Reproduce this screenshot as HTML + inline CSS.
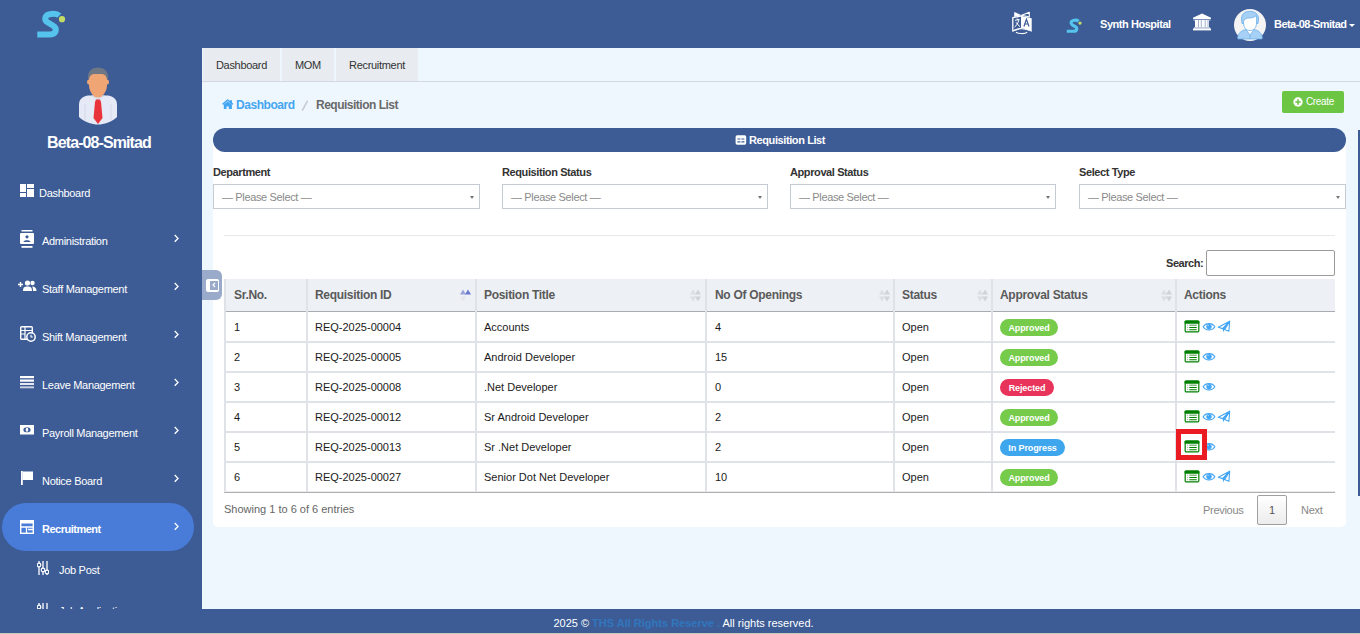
<!DOCTYPE html>
<html><head><meta charset="utf-8">
<style>
*{box-sizing:border-box;margin:0;padding:0}
html,body{width:1360px;height:634px;overflow:hidden;font-family:"Liberation Sans",sans-serif;background:#eff7fe;color:#212529;position:relative}
.a{position:absolute;white-space:nowrap}
#hdr{left:0;top:0;width:1360px;height:48px;background:#3d5c96}
#side{left:0;top:48px;width:202px;height:561px;background:#3d5c96;overflow:hidden}
#foot{left:0;top:609px;width:1360px;height:24px;background:#3d5c96;color:#fff;font-size:11px;text-align:center;line-height:29px;letter-spacing:0;padding-left:7px}
.tab{position:absolute;top:48px;height:33px;background:#e8ecf0;font-size:11px;color:#333;line-height:34px;text-align:center;letter-spacing:-.3px}
.nav{position:absolute;left:0;width:202px;height:48px;color:#fff;font-size:11px;letter-spacing:-.3px}
.nav .t{position:absolute;left:42px;top:17px;line-height:14px}
.nav .ch{position:absolute;left:173px;top:16px;width:6px;height:6px}
.nav svg.i{position:absolute;left:20px}
.card{left:213px;top:140px;width:1133px;height:387px;background:#fff;border-radius:0 0 5px 5px}
.chead{left:213px;top:128px;width:1133px;height:24px;background:#3d5c96;border-radius:12px;color:#fff;font-weight:bold;font-size:12px;line-height:24px}
.lbl{position:absolute;top:166px;font-size:11px;font-weight:bold;color:#333;letter-spacing:-.4px}
.sel{position:absolute;top:184px;height:25px;border:1px solid #c6cbd3;background:#fff;font-size:11px;color:#8a8a8a;line-height:24px;padding-left:8px;letter-spacing:-.35px}
.sel:after{content:"";position:absolute;right:5px;top:11px;border-left:2px solid transparent;border-right:2px solid transparent;border-top:3px solid #777}
.hl{position:absolute;background:#dfe3e8}
.th{position:absolute;top:288px;font-size:12px;font-weight:bold;color:#5a5a5a;letter-spacing:-.3px}
.td{position:absolute;font-size:11px;color:#1a1a1a;margin-top:1px}
.badge{position:absolute;left:1000px;height:17px;line-height:18px;border-radius:9px;color:#fff;font-size:9px;font-weight:bold;text-align:center;letter-spacing:-.1px}
.ap{background:#76cb4b;width:58px}.rj{background:#e8335a;width:54px}.ip{background:#3ea6ec;width:65px}
.sort{position:absolute;top:289px;width:11px;height:13px}
</style></head><body>
<div id="hdr" class="a"></div>
<!-- logo -->
<svg class="a" style="left:30px;top:6px" width="40" height="36" viewBox="30 6 40 36">
  <path d="M59.3 15.6 C57 13.5 52 13.6 49 14.3 C44.5 15.4 44.2 20.3 47.5 22.3 L53.2 25.8 C57.6 28.6 56.3 34.4 50.3 34.4 L37.3 34.4" fill="none" stroke="#56c3ec" stroke-width="6"/>
  <circle cx="62" cy="19.2" r="3.1" fill="#c3dc66"/>
</svg>
<!-- header right -->
<svg class="a" style="left:1008px;top:8px" width="30" height="30" viewBox="0 0 30 30">
  <path d="M6.2 4 L13.7 7.2 L6.2 9 Z" fill="#fff"/>
  <path d="M13.7 7.2 L21.3 4.2 L21.3 9 Z" fill="#3d5c96" stroke="#fff" stroke-width="1.1" stroke-linejoin="round"/>
  <path d="M4.8 9.6 L13.7 7.9 L13.7 20 L4.8 23 Z" fill="#3d5c96" stroke="#fff" stroke-width="1.3" stroke-linejoin="round"/>
  <path d="M13.7 7.9 L23.7 10.2 L23.7 23.2 L13.7 20 Z" fill="#fff"/>
  <path d="M15.9 18.5 L18.4 11.2 L21 18.5 M16.8 16 L20 16" fill="none" stroke="#3d5c96" stroke-width="1.2"/>
  <path d="M7 12.3 L11.5 11.5 M9.2 10.5 L9.5 12 M10.8 12 C10 15.5 8.5 17.5 6.6 19 M8 14.3 C9 16 10.5 17.5 12 18.6" fill="none" stroke="#fff" stroke-width="1"/>
  <path d="M4.8 23 C8 21 11 20.5 13.7 20.8 C17 21 20.5 22 23.7 23.2" fill="none" stroke="#fff" stroke-width="1"/>
  <path d="M8 24.1 C10 25.8 17 26.3 19.2 24.2" fill="none" stroke="#fff" stroke-width="1.1"/>
</svg>
<svg class="a" style="left:1064px;top:16px" width="22" height="18" viewBox="1064 16 22 18">
  <g transform="translate(1046.84 12.85) scale(.535)"><path d="M59.3 15.6 C57 13.5 52 13.6 49 14.3 C44.5 15.4 44.2 20.3 47.5 22.3 L53.2 25.8 C57.6 28.6 56.3 34.4 50.3 34.4 L37.3 34.4" fill="none" stroke="#56c3ec" stroke-width="6"/>
  <circle cx="62" cy="19.2" r="3.1" fill="#c3dc66"/></g>
</svg>
<div class="a" style="left:1100px;top:18px;font-size:11px;font-weight:bold;color:#fff;letter-spacing:-.45px">Synth Hospital</div>
<svg class="a" style="left:1192px;top:12px" width="20" height="20" viewBox="0 0 20 20">
  <path d="M1 5.8 L10 1.6 L19 5.8 L19 7 L1 7 Z" fill="#fff"/>
  <rect x="1.5" y="7.6" width="17" height=".9" fill="#dfe5f0"/>
  <rect x="3" y="8" width="14" height="7.2" fill="#fff"/>
  <path d="M6.5 8 V15 M9.3 8 V15 M13.2 8 V15 M16 8 V15" stroke="#8a9cc4" stroke-width=".8"/>
  <rect x="2" y="15.4" width="16" height="1" fill="#fff"/>
  <rect x="1" y="16.4" width="18" height="2" fill="#fff"/>
</svg>
<svg class="a" style="left:1234px;top:9px" width="32" height="32" viewBox="0 0 32 32">
  <circle cx="16" cy="16" r="16" fill="#f4f4f4"/>
  <path d="M3.6 28.5 C4.5 23 9 20.8 12 20.6 L20 20.6 C23 20.8 27.5 23 28.4 28.5 L28 30 L4 30 Z" fill="#a6d0f5" stroke="#6aaee8" stroke-width=".7"/>
  <path d="M12.2 20.8 L16 26 L19.8 20.8 M16 26 L16 30" fill="#fff" stroke="#6aaee8" stroke-width=".7"/>
  <path d="M7.6 11 C7 5.5 10.5 2.3 15.5 2.3 C20.5 2.3 24.5 4.5 24.5 10 L24 14.5 L22.5 14.5 L9.5 14.5 L8 14.5 Z" fill="#a6d0f5" stroke="#6aaee8" stroke-width=".8"/>
  <path d="M9.6 12 C10.5 9.5 13 9 15.5 9 C18.5 9 21 8 22.3 6.5 C22.8 9 22.5 12 22.5 14 C22.5 19 19.5 21.5 16 21.5 C12.5 21.5 9.6 19 9.6 14 Z" fill="#fff" stroke="#6aaee8" stroke-width=".8"/>
</svg>
<div class="a" style="left:1274px;top:18px;font-size:11px;font-weight:bold;color:#fff;letter-spacing:-.55px">Beta-08-Smitad</div>
<div class="a" style="left:1349px;top:24px;border-left:3px solid transparent;border-right:3px solid transparent;border-top:3px solid #fff"></div>

<div id="side" class="a"></div>
<!-- sidebar avatar -->
<svg class="a" style="left:76px;top:64px" width="44" height="64" viewBox="76 64 44 64">
  <path d="M79 105 C79 98 84 95.5 90 95.5 L106 95.5 C112 95.5 117 98 117 105 L117 117 C111 122.5 104 124.5 98 124.5 C92 124.5 85 122.5 79 117 Z" fill="#e6eaf6"/>
  <path d="M85 104 L85 120 M111 104 L111 120" stroke="#d4d9e8" stroke-width="1"/>
  <path d="M91 95.5 L98 101 L105 95.5 Z" fill="#d8dde8"/>
  <rect x="94.5" y="88" width="7" height="9" fill="#e8956a"/>
  <ellipse cx="88.8" cy="82" rx="1.8" ry="2.5" fill="#f0a574"/>
  <ellipse cx="107.2" cy="82" rx="1.8" ry="2.5" fill="#f0a574"/>
  <path d="M89 78 C89 70 93 71 98 71 C103 71 107 70 107 78 L107 85 C107 92 102 97.5 98 97.5 C94 97.5 89 92 89 85 Z" fill="#f0a574"/>
  <path d="M88 80 C87 71 92 67.5 98 67.5 C104 67.5 109 71 108 80 L107 79 C106 75 104 74 101 74 L95 74 C92 74 90 75 89 79 Z" fill="#6f7785"/>
  <path d="M96 99.5 L100 99.5 L101 102 L102.5 118 L98 124 L93.5 118 L95 102 Z" fill="#e8333a"/>
</svg>
<div class="a" style="left:0;top:134px;width:198px;text-align:center;font-size:16px;font-weight:bold;color:#fff;letter-spacing:-.9px">Beta-08-Smitad</div>

<!-- nav items -->
<div class="nav" style="top:169px">
  <svg class="i" style="top:15px" width="14" height="14" viewBox="0 0 14 14"><rect x="0" y="0" width="6" height="8" fill="#fff"/><rect x="7" y="0" width="7" height="4" fill="#fff"/><rect x="0" y="9" width="6" height="4" fill="#fff"/><rect x="7" y="5" width="7" height="8" fill="#fff"/></svg>
  <div class="t" style="left:39px;top:17px">Dashboard</div>
</div>
<div class="nav" style="top:217px">
  <svg class="i" style="top:13px" width="14" height="19" viewBox="0 0 14 19"><rect x="1.5" y="0" width="11" height="1.5" fill="#fff"/><rect x="0" y="3" width="14" height="11" rx="1" fill="#fff"/><rect x="1.5" y="16" width="11" height="1.8" fill="#fff"/><circle cx="7" cy="6.8" r="1.6" fill="#3d5c96"/><path d="M3.5 12 C3.5 9.5 10.5 9.5 10.5 12 Z" fill="#3d5c96"/></svg>
  <div class="t" style="top:17px">Administration</div>
  <svg class="ch" style="left:173px;top:17px;width:7px;height:9px" width="7" height="9" viewBox="0 0 7 9"><path d="M1.7 1 L5 4.4 L1.7 7.8" fill="none" stroke="#fff" stroke-width="1.35"/></svg>
</div>
<div class="nav" style="top:265px">
  <svg class="i" style="top:15px;left:18px" width="19" height="12" viewBox="0 0 19 12"><path d="M0 4.5 H5 M2.5 2 V7" stroke="#fff" stroke-width="1.4"/><circle cx="9.5" cy="3" r="2.6" fill="#fff"/><circle cx="14.5" cy="3" r="2.2" fill="#fff"/><path d="M5 11 C5 7 7 6.5 9.5 6.5 C12 6.5 14 7 14 11 Z" fill="#fff"/><path d="M14 6.5 C17 6.5 18.5 8 18.5 11 L15 11 C15 9 14.8 7.5 14 6.5 Z" fill="#fff"/></svg>
  <div class="t" style="top:17px">Staff Management</div>
  <svg class="ch" style="left:173px;top:17px;width:7px;height:9px" width="7" height="9" viewBox="0 0 7 9"><path d="M1.7 1 L5 4.4 L1.7 7.8" fill="none" stroke="#fff" stroke-width="1.35"/></svg>
</div>
<div class="nav" style="top:313px">
  <svg class="i" style="top:13px" width="16" height="16" viewBox="0 0 16 16"><rect x=".7" y=".7" width="11.6" height="12.6" rx="1" fill="none" stroke="#fff" stroke-width="1.4"/><path d="M1 4.5 H12 M5 1 V13 M1 8 H5" stroke="#fff" stroke-width="1.2"/><circle cx="11" cy="11" r="4.2" fill="#3d5c96" stroke="#fff" stroke-width="1.5"/><path d="M11 8.8 V11 H12.8" fill="none" stroke="#fff" stroke-width="1.1"/></svg>
  <div class="t" style="top:17px">Shift Management</div>
  <svg class="ch" style="left:173px;top:17px;width:7px;height:9px" width="7" height="9" viewBox="0 0 7 9"><path d="M1.7 1 L5 4.4 L1.7 7.8" fill="none" stroke="#fff" stroke-width="1.35"/></svg>
</div>
<div class="nav" style="top:361px">
  <svg class="i" style="top:15px" width="14" height="13" viewBox="0 0 14 13"><rect x="0" y="0" width="14" height="2.2" fill="#fff"/><rect x="0" y="3.5" width="14" height="2.2" fill="#fff"/><rect x="0" y="7" width="14" height="2" fill="#e4e8f0"/><rect x="0" y="10.3" width="14" height="2" fill="#c8cfdc"/></svg>
  <div class="t" style="top:17px">Leave Management</div>
  <svg class="ch" style="left:173px;top:17px;width:7px;height:9px" width="7" height="9" viewBox="0 0 7 9"><path d="M1.7 1 L5 4.4 L1.7 7.8" fill="none" stroke="#fff" stroke-width="1.35"/></svg>
</div>
<div class="nav" style="top:409px">
  <svg class="i" style="top:16px" width="14" height="10" viewBox="0 0 14 10"><rect x="0" y="0" width="14" height="9.5" fill="#fff"/><ellipse cx="7" cy="4.75" rx="3.6" ry="2.6" fill="#3d5c96"/><ellipse cx="7" cy="4.75" rx="1.3" ry="1.9" fill="#fff"/></svg>
  <div class="t" style="top:17px">Payroll Management</div>
  <svg class="ch" style="left:173px;top:17px;width:7px;height:9px" width="7" height="9" viewBox="0 0 7 9"><path d="M1.7 1 L5 4.4 L1.7 7.8" fill="none" stroke="#fff" stroke-width="1.35"/></svg>
</div>
<div class="nav" style="top:457px">
  <svg class="i" style="top:14px;left:21px" width="13" height="14" viewBox="0 0 13 14"><rect x="0" y="0" width="1.8" height="14" fill="#fff"/><path d="M1.8 .5 L12 .5 L12 9 L1.8 9 Z" fill="#fff"/></svg>
  <div class="t" style="top:17px">Notice Board</div>
  <svg class="ch" style="left:173px;top:17px;width:7px;height:9px" width="7" height="9" viewBox="0 0 7 9"><path d="M1.7 1 L5 4.4 L1.7 7.8" fill="none" stroke="#fff" stroke-width="1.35"/></svg>
</div>
<div class="a" style="left:2px;top:503px;width:192px;height:48px;border-radius:24px;background:#487cd8"></div>
<div class="nav" style="top:505px">
  <svg class="i" style="top:15px" width="14" height="14" viewBox="0 0 14 14"><rect x=".7" y=".7" width="12.6" height="12.6" fill="none" stroke="#fff" stroke-width="1.4"/><rect x="0" y="0" width="14" height="3.5" fill="#fff"/><path d="M1 7 H13 M6.5 7 V13 M8 9.5 H13" stroke="#fff" stroke-width="1.3"/></svg>
  <div class="t" style="top:17px;font-weight:bold;font-size:11px;letter-spacing:-.5px">Recruitment</div>
  <svg class="ch" style="left:173px;top:17px;width:7px;height:9px" width="7" height="9" viewBox="0 0 7 9"><path d="M1.7 1 L5 4.4 L1.7 7.8" fill="none" stroke="#fff" stroke-width="1.35"/></svg>
</div>
<div class="nav" style="top:546px">
  <svg class="i" style="top:15px;left:37px" width="12" height="14" viewBox="0 0 12 14"><path d="M2 0 V14 M6 0 V14 M10 0 V14" stroke="#fff" stroke-width="1.3"/><circle cx="2" cy="4" r="1.8" fill="#3d5c96" stroke="#fff" stroke-width="1.2"/><circle cx="6" cy="9" r="1.8" fill="#3d5c96" stroke="#fff" stroke-width="1.2"/><circle cx="10" cy="11" r="1.8" fill="#3d5c96" stroke="#fff" stroke-width="1.2"/></svg>
  <div class="t" style="left:59px;top:17px">Job Post</div>
</div>
<div class="a" style="left:0;top:598px;width:202px;height:11px;overflow:hidden">
  <svg class="a" style="top:5px;left:37px" width="12" height="14" viewBox="0 0 12 14"><path d="M2 0 V14 M6 0 V14 M10 0 V14" stroke="#fff" stroke-width="1.3"/><circle cx="2" cy="4" r="1.8" fill="#3d5c96" stroke="#fff" stroke-width="1.2"/><circle cx="6" cy="10" r="1.8" fill="#3d5c96" stroke="#fff" stroke-width="1.2"/><circle cx="10" cy="12" r="1.8" fill="#3d5c96" stroke="#fff" stroke-width="1.2"/></svg>
  <div class="a" style="left:59px;top:7px;font-size:11px;color:#fff;letter-spacing:-.3px">Job Application</div>
</div>

<!-- tabs -->
<div class="a" style="left:202px;top:81px;width:1158px;height:1px;background:#d3d9e0"></div>
<div class="tab" style="left:203px;width:77px">Dashboard</div>
<div class="tab" style="left:282px;width:52px">MOM</div>
<div class="tab" style="left:336px;width:82px">Recruitment</div>

<!-- breadcrumb -->
<svg class="a" style="left:222px;top:99px" width="12" height="11" viewBox="0 0 12 11"><path d="M.6 5.4 L5.7 1 L10.8 5.4" fill="none" stroke="#44a6f0" stroke-width="1.6" stroke-linejoin="round"/><rect x="8" y="1.2" width="2" height="3" fill="#44a6f0"/><path d="M1.8 5.6 L5.7 2.4 L9.9 5.6 L9.9 10 L6.8 10 L6.8 7.4 L4.5 7.4 L4.5 10 L1.8 10 Z" fill="#44a6f0"/></svg>
<div class="a" style="left:236px;top:98px;font-size:12px;font-weight:bold;color:#44a6f0;letter-spacing:-.45px">Dashboard</div>
<svg class="a" style="left:300px;top:99px" width="10" height="13" viewBox="0 0 10 13"><path d="M7.6 1.6 L2.2 11.6" stroke="#c5c9ce" stroke-width="1.5"/></svg>
<div class="a" style="left:316px;top:98px;font-size:12px;font-weight:bold;color:#6a6a6a;letter-spacing:-.5px">Requisition List</div>
<!-- create -->
<div class="a" style="left:1282px;top:91px;width:62px;height:22px;background:#6cc644;border-radius:2px;color:#fff;font-size:10px;line-height:22px;letter-spacing:-.35px">
  <svg class="a" style="left:11px;top:6px" width="10" height="10" viewBox="0 0 10 10"><circle cx="5" cy="5" r="4.7" fill="#fff"/><path d="M5 2.3 V7.7 M2.3 5 H7.7" stroke="#6cc644" stroke-width="1.6"/></svg>
  <span class="a" style="left:24px;top:0">Create</span>
</div>

<!-- card -->
<div class="card a"></div>
<div class="chead a">
  <svg class="a" style="left:522px;top:6.5px" width="12" height="11" viewBox="0 0 12 11"><rect x=".6" y=".3" width="10.6" height="9.4" rx="1.6" fill="#fff"/><path d="M2.4 4 H5.4 M6.4 4 H9.4 M2.4 6.8 H5.4 M6.4 6.8 H9.4" stroke="#3d5c96" stroke-width="1.2"/></svg>
  <span class="a" style="left:536px;top:0;font-size:11px;letter-spacing:-.4px">Requisition List</span>
</div>
<!-- scrollbar -->
<div class="a" style="left:1358px;top:130px;width:2px;height:366px;background:#3d5c96"></div>

<!-- filters -->
<div class="lbl" style="left:213px">Department</div>
<div class="lbl" style="left:502px">Requisition Status</div>
<div class="lbl" style="left:790px">Approval Status</div>
<div class="lbl" style="left:1079px">Select Type</div>
<div class="sel" style="left:213px;width:267px">— Please Select —</div>
<div class="sel" style="left:502px;width:266px">— Please Select —</div>
<div class="sel" style="left:790px;width:266px">— Please Select —</div>
<div class="sel" style="left:1079px;width:267px">— Please Select —</div>
<div class="a" style="left:224px;top:235px;width:1111px;height:1px;background:#e6e8eb"></div>

<!-- search -->
<div class="a" style="left:1166px;top:257px;font-size:11px;font-weight:bold;color:#333;letter-spacing:-.45px">Search:</div>
<div class="a" style="left:1206px;top:250px;width:129px;height:26px;border:1px solid #9a9a9a;border-radius:2px;background:#fff"></div>

<!-- sidebar toggle -->
<div class="a" style="left:202px;top:270px;width:20px;height:30px;background:#9aaaca;border-radius:0 6px 6px 0"></div>
<div class="a" style="left:206px;top:279px;width:12.5px;height:12.5px;border:2px solid #fff;border-left-width:4px;border-right-width:1.6px;border-radius:2px"></div>
<svg class="a" style="left:212px;top:282px" width="4" height="6" viewBox="0 0 4 6"><path d="M3 1 L1 3 L3 5" fill="none" stroke="#fff" stroke-width="1.2"/></svg>

<!-- table grid -->
<div class="a" style="left:225px;top:279px;width:1110px;height:32px;background:#edf0f5"></div>
<div class="a" style="left:225px;top:311px;width:1110px;height:1px;background:#a9adb2"></div>
<div class="hl" style="left:225px;top:341px;width:1110px;height:2px"></div>
<div class="hl" style="left:225px;top:371px;width:1110px;height:2px"></div>
<div class="hl" style="left:225px;top:401px;width:1110px;height:2px"></div>
<div class="hl" style="left:225px;top:431px;width:1110px;height:2px"></div>
<div class="hl" style="left:225px;top:461px;width:1110px;height:2px"></div>
<div class="a" style="left:224px;top:491px;width:1111px;height:1px;background:#e8eaed"></div><div class="a" style="left:224px;top:492px;width:1111px;height:1px;background:#b0b0b0"></div>
<div class="hl" style="left:224px;top:279px;width:2px;height:212px"></div>
<div class="hl" style="left:306px;top:279px;width:2px;height:213px"></div>
<div class="hl" style="left:475px;top:279px;width:2px;height:213px"></div>
<div class="hl" style="left:705px;top:279px;width:2px;height:213px"></div>
<div class="hl" style="left:893px;top:279px;width:2px;height:213px"></div>
<div class="hl" style="left:991px;top:279px;width:2px;height:213px"></div>
<div class="hl" style="left:1175px;top:279px;width:2px;height:213px"></div>


<div class="th" style="left:234px">Sr.No.</div>
<div class="th" style="left:315px">Requisition ID</div>
<div class="th" style="left:484px">Position Title</div>
<div class="th" style="left:715px">No Of Openings</div>
<div class="th" style="left:902px">Status</div>
<div class="th" style="left:1000px">Approval Status</div>
<div class="th" style="left:1184px">Actions</div>
<!-- sort icons -->
<svg class="sort" style="left:460px" viewBox="0 0 11 13"><path d="M3 12.5 L6 7.5 L0 7.5 Z" fill="#e3e5ea"/><path d="M3 .5 L6 5.5 L0 5.5 Z" fill="#9aa3d8"/><path d="M8 .5 L11 5.5 L5 5.5 Z" fill="#6b76cf"/></svg>
<svg class="sort" style="left:690px" viewBox="0 0 11 13"><path d="M3 .5 L6 5.5 L0 5.5 Z M3 12.5 L6 7.5 L0 7.5 Z" fill="#dcdfe4"/><path d="M8 .5 L11 5.5 L5 5.5 Z M8 12.5 L11 7.5 L5 7.5 Z" fill="#d0d3d8"/></svg>
<svg class="sort" style="left:879px" viewBox="0 0 11 13"><path d="M3 .5 L6 5.5 L0 5.5 Z M3 12.5 L6 7.5 L0 7.5 Z" fill="#dcdfe4"/><path d="M8 .5 L11 5.5 L5 5.5 Z M8 12.5 L11 7.5 L5 7.5 Z" fill="#d0d3d8"/></svg>
<svg class="sort" style="left:977px" viewBox="0 0 11 13"><path d="M3 .5 L6 5.5 L0 5.5 Z M3 12.5 L6 7.5 L0 7.5 Z" fill="#dcdfe4"/><path d="M8 .5 L11 5.5 L5 5.5 Z M8 12.5 L11 7.5 L5 7.5 Z" fill="#d0d3d8"/></svg>
<svg class="sort" style="left:1161px" viewBox="0 0 11 13"><path d="M3 .5 L6 5.5 L0 5.5 Z M3 12.5 L6 7.5 L0 7.5 Z" fill="#dcdfe4"/><path d="M8 .5 L11 5.5 L5 5.5 Z M8 12.5 L11 7.5 L5 7.5 Z" fill="#d0d3d8"/></svg>

<div class="td" style="left:234px;top:320px">1</div>
<div class="td" style="left:315px;top:320px">REQ-2025-00004</div>
<div class="td" style="left:484px;top:320px">Accounts</div>
<div class="td" style="left:715px;top:320px">4</div>
<div class="td" style="left:902px;top:320px">Open</div>
<div class="badge ap" style="top:319px">Approved</div>
<svg class="a" style="left:1183.5px;top:319.5px" width="16" height="13" viewBox="0 0 17 14"><rect x="1.15" y="1.15" width="14.7" height="11.7" rx="1.2" fill="#fff" stroke="#008000" stroke-width="1.3"/><rect x=".5" y=".5" width="16" height="3.6" rx="1.2" fill="#008000"/><path d="M5.6 5.6 H13.6" stroke="#6aa86a" stroke-width="1.3"/><path d="M5.6 8.1 H13.6 M5.6 10.4 H13.6" stroke="#008000" stroke-width="1.1"/><path d="M3.6 5.6 H4.3 M3.6 8.1 H4.3 M3.6 10.4 H4.3" stroke="#555" stroke-width=".9"/></svg>
<svg class="a" style="left:1202px;top:322px" width="14" height="10" viewBox="0 0 14 10"><path d="M1.2 4.8 C3.7 .6 10.3 .6 12.8 4.8 C10.3 9 3.7 9 1.2 4.8 Z" fill="#fff" stroke="#42a5f5" stroke-width="1.2"/><circle cx="7" cy="4.6" r="2.7" fill="#42a5f5"/><circle cx="6.1" cy="3.5" r=".6" fill="#cfe8fb"/></svg>
<svg class="a" style="left:1217px;top:320px" width="14" height="14" viewBox="0 0 14 14"><path d="M12.7 1.2 L1.3 7.3 L5.6 8.6 L12.7 1.2 L11.9 11.3 L7.5 9.6 Z" fill="none" stroke="#42a5f5" stroke-width="1.1" stroke-linejoin="round"/><path d="M5.6 8.6 L12.3 1.8 L7.3 9.6 L6.5 12.6 Z" fill="#42a5f5"/></svg>
<div class="td" style="left:234px;top:350px">2</div>
<div class="td" style="left:315px;top:350px">REQ-2025-00005</div>
<div class="td" style="left:484px;top:350px">Android Developer</div>
<div class="td" style="left:715px;top:350px">15</div>
<div class="td" style="left:902px;top:350px">Open</div>
<div class="badge ap" style="top:349px">Approved</div>
<svg class="a" style="left:1183.5px;top:349.5px" width="16" height="13" viewBox="0 0 17 14"><rect x="1.15" y="1.15" width="14.7" height="11.7" rx="1.2" fill="#fff" stroke="#008000" stroke-width="1.3"/><rect x=".5" y=".5" width="16" height="3.6" rx="1.2" fill="#008000"/><path d="M5.6 5.6 H13.6" stroke="#6aa86a" stroke-width="1.3"/><path d="M5.6 8.1 H13.6 M5.6 10.4 H13.6" stroke="#008000" stroke-width="1.1"/><path d="M3.6 5.6 H4.3 M3.6 8.1 H4.3 M3.6 10.4 H4.3" stroke="#555" stroke-width=".9"/></svg>
<svg class="a" style="left:1202px;top:352px" width="14" height="10" viewBox="0 0 14 10"><path d="M1.2 4.8 C3.7 .6 10.3 .6 12.8 4.8 C10.3 9 3.7 9 1.2 4.8 Z" fill="#fff" stroke="#42a5f5" stroke-width="1.2"/><circle cx="7" cy="4.6" r="2.7" fill="#42a5f5"/><circle cx="6.1" cy="3.5" r=".6" fill="#cfe8fb"/></svg>
<div class="td" style="left:234px;top:380px">3</div>
<div class="td" style="left:315px;top:380px">REQ-2025-00008</div>
<div class="td" style="left:484px;top:380px">.Net Developer</div>
<div class="td" style="left:715px;top:380px">0</div>
<div class="td" style="left:902px;top:380px">Open</div>
<div class="badge rj" style="top:379px">Rejected</div>
<svg class="a" style="left:1183.5px;top:379.5px" width="16" height="13" viewBox="0 0 17 14"><rect x="1.15" y="1.15" width="14.7" height="11.7" rx="1.2" fill="#fff" stroke="#008000" stroke-width="1.3"/><rect x=".5" y=".5" width="16" height="3.6" rx="1.2" fill="#008000"/><path d="M5.6 5.6 H13.6" stroke="#6aa86a" stroke-width="1.3"/><path d="M5.6 8.1 H13.6 M5.6 10.4 H13.6" stroke="#008000" stroke-width="1.1"/><path d="M3.6 5.6 H4.3 M3.6 8.1 H4.3 M3.6 10.4 H4.3" stroke="#555" stroke-width=".9"/></svg>
<svg class="a" style="left:1202px;top:382px" width="14" height="10" viewBox="0 0 14 10"><path d="M1.2 4.8 C3.7 .6 10.3 .6 12.8 4.8 C10.3 9 3.7 9 1.2 4.8 Z" fill="#fff" stroke="#42a5f5" stroke-width="1.2"/><circle cx="7" cy="4.6" r="2.7" fill="#42a5f5"/><circle cx="6.1" cy="3.5" r=".6" fill="#cfe8fb"/></svg>
<div class="td" style="left:234px;top:410px">4</div>
<div class="td" style="left:315px;top:410px">REQ-2025-00012</div>
<div class="td" style="left:484px;top:410px">Sr Android Developer</div>
<div class="td" style="left:715px;top:410px">2</div>
<div class="td" style="left:902px;top:410px">Open</div>
<div class="badge ap" style="top:409px">Approved</div>
<svg class="a" style="left:1183.5px;top:409.5px" width="16" height="13" viewBox="0 0 17 14"><rect x="1.15" y="1.15" width="14.7" height="11.7" rx="1.2" fill="#fff" stroke="#008000" stroke-width="1.3"/><rect x=".5" y=".5" width="16" height="3.6" rx="1.2" fill="#008000"/><path d="M5.6 5.6 H13.6" stroke="#6aa86a" stroke-width="1.3"/><path d="M5.6 8.1 H13.6 M5.6 10.4 H13.6" stroke="#008000" stroke-width="1.1"/><path d="M3.6 5.6 H4.3 M3.6 8.1 H4.3 M3.6 10.4 H4.3" stroke="#555" stroke-width=".9"/></svg>
<svg class="a" style="left:1202px;top:412px" width="14" height="10" viewBox="0 0 14 10"><path d="M1.2 4.8 C3.7 .6 10.3 .6 12.8 4.8 C10.3 9 3.7 9 1.2 4.8 Z" fill="#fff" stroke="#42a5f5" stroke-width="1.2"/><circle cx="7" cy="4.6" r="2.7" fill="#42a5f5"/><circle cx="6.1" cy="3.5" r=".6" fill="#cfe8fb"/></svg>
<svg class="a" style="left:1217px;top:410px" width="14" height="14" viewBox="0 0 14 14"><path d="M12.7 1.2 L1.3 7.3 L5.6 8.6 L12.7 1.2 L11.9 11.3 L7.5 9.6 Z" fill="none" stroke="#42a5f5" stroke-width="1.1" stroke-linejoin="round"/><path d="M5.6 8.6 L12.3 1.8 L7.3 9.6 L6.5 12.6 Z" fill="#42a5f5"/></svg>
<div class="td" style="left:234px;top:440px">5</div>
<div class="td" style="left:315px;top:440px">REQ-2025-00013</div>
<div class="td" style="left:484px;top:440px">Sr .Net Developer</div>
<div class="td" style="left:715px;top:440px">2</div>
<div class="td" style="left:902px;top:440px">Open</div>
<div class="badge ip" style="top:439px">In Progress</div>
<svg class="a" style="left:1183.5px;top:439.5px" width="16" height="13" viewBox="0 0 17 14"><rect x="1.15" y="1.15" width="14.7" height="11.7" rx="1.2" fill="#fff" stroke="#008000" stroke-width="1.3"/><rect x=".5" y=".5" width="16" height="3.6" rx="1.2" fill="#008000"/><path d="M5.6 5.6 H13.6" stroke="#6aa86a" stroke-width="1.3"/><path d="M5.6 8.1 H13.6 M5.6 10.4 H13.6" stroke="#008000" stroke-width="1.1"/><path d="M3.6 5.6 H4.3 M3.6 8.1 H4.3 M3.6 10.4 H4.3" stroke="#555" stroke-width=".9"/></svg>
<svg class="a" style="left:1202px;top:442px" width="14" height="10" viewBox="0 0 14 10"><path d="M1.2 4.8 C3.7 .6 10.3 .6 12.8 4.8 C10.3 9 3.7 9 1.2 4.8 Z" fill="#fff" stroke="#42a5f5" stroke-width="1.2"/><circle cx="7" cy="4.6" r="2.7" fill="#42a5f5"/><circle cx="6.1" cy="3.5" r=".6" fill="#cfe8fb"/></svg>
<div class="td" style="left:234px;top:470px">6</div>
<div class="td" style="left:315px;top:470px">REQ-2025-00027</div>
<div class="td" style="left:484px;top:470px">Senior Dot Net Developer</div>
<div class="td" style="left:715px;top:470px">10</div>
<div class="td" style="left:902px;top:470px">Open</div>
<div class="badge ap" style="top:469px">Approved</div>
<svg class="a" style="left:1183.5px;top:469.5px" width="16" height="13" viewBox="0 0 17 14"><rect x="1.15" y="1.15" width="14.7" height="11.7" rx="1.2" fill="#fff" stroke="#008000" stroke-width="1.3"/><rect x=".5" y=".5" width="16" height="3.6" rx="1.2" fill="#008000"/><path d="M5.6 5.6 H13.6" stroke="#6aa86a" stroke-width="1.3"/><path d="M5.6 8.1 H13.6 M5.6 10.4 H13.6" stroke="#008000" stroke-width="1.1"/><path d="M3.6 5.6 H4.3 M3.6 8.1 H4.3 M3.6 10.4 H4.3" stroke="#555" stroke-width=".9"/></svg>
<svg class="a" style="left:1202px;top:472px" width="14" height="10" viewBox="0 0 14 10"><path d="M1.2 4.8 C3.7 .6 10.3 .6 12.8 4.8 C10.3 9 3.7 9 1.2 4.8 Z" fill="#fff" stroke="#42a5f5" stroke-width="1.2"/><circle cx="7" cy="4.6" r="2.7" fill="#42a5f5"/><circle cx="6.1" cy="3.5" r=".6" fill="#cfe8fb"/></svg>
<svg class="a" style="left:1217px;top:470px" width="14" height="14" viewBox="0 0 14 14"><path d="M12.7 1.2 L1.3 7.3 L5.6 8.6 L12.7 1.2 L11.9 11.3 L7.5 9.6 Z" fill="none" stroke="#42a5f5" stroke-width="1.1" stroke-linejoin="round"/><path d="M5.6 8.6 L12.3 1.8 L7.3 9.6 L6.5 12.6 Z" fill="#42a5f5"/></svg>
<div class="a" style="left:1176px;top:429px;width:31px;height:31px;border:5px solid #ea1b23"></div>
<div class="a" style="left:224px;top:503px;font-size:11px;color:#666;letter-spacing:0px">Showing 1 to 6 of 6 entries</div>
<div class="a" style="left:1203px;top:504px;font-size:11px;color:#888;letter-spacing:-.3px">Previous</div>
<div class="a" style="left:1257px;top:495px;width:30px;height:30px;border:1px solid #a0a0a0;border-radius:2px;background:linear-gradient(#fff,#ececec);font-size:11px;color:#555;text-align:center;line-height:28px">1</div>
<div class="a" style="left:1301px;top:504px;font-size:11px;color:#888;letter-spacing:-.3px">Next</div>
<div id="foot" class="a">2025 © <span style="color:#3176bd;font-weight:bold">THS All Rights Reserve .</span> All rights reserved.</div>
<div class="a" style="left:0;top:633px;width:1360px;height:1px;background:#c6cbb9"></div>
</body></html>
